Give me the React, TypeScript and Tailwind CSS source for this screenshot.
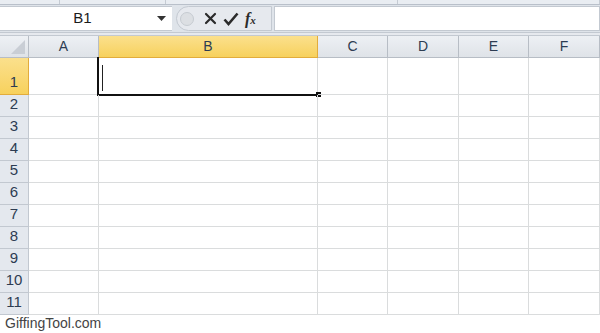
import { useState } from "react";

const cols = [
  { id: "A", w: 70 },
  { id: "B", w: 219 },
  { id: "C", w: 70 },
  { id: "D", w: 71 },
  { id: "E", w: 70 },
  { id: "F", w: 71 },
];

const rows = [1, 2, 3, 4, 5, 6, 7, 8, 9, 10, 11];

export default function App() {
  const [active] = useState({ col: "B", row: 1 });

  return (
    <div
      className="w-[600px] h-[333px] overflow-hidden bg-white flex flex-col"
      style={{ fontFamily: "'Liberation Sans', Arial, sans-serif" }}
    >
      {/* ribbon bottom edge */}
      <div className="h-[5px] bg-[#e9edf2] border-b border-[#b9c0ca] flex shrink-0">
        <div className="w-[60px] border-r border-[#c5cbd3]" />
        <div className="w-[106px] border-r border-[#c5cbd3]" />
        <div className="w-[232px] border-r border-[#c5cbd3]" />
        <div className="flex-1 border-r border-[#c5cbd3]" />
      </div>

      {/* formula bar */}
      <div className="h-[27px] bg-[#dfe4ea] pt-[1px] flex shrink-0">
        <div className="w-[172px] h-[25px] bg-white border-y border-[#c3c9d1] flex items-center">
          <span className="flex-1 text-center text-[15px] text-[#1b1b1b] pl-[8px]">{active.col}{active.row}</span>
          <svg width="9" height="5" viewBox="0 0 9 5" className="mr-[6px]">
            <path d="M0 0h9L4.5 5z" fill="#333" />
          </svg>
        </div>
        <div className="w-[96px] h-[25px] flex items-center bg-[#e6e9ee] rounded-l-full border border-[#c3c9d1] ml-[4px]">
          <div className="w-[14px] h-[14px] rounded-full bg-[#dcdfe3] border border-[#c6cbd1] ml-[3px]" />
          <svg width="13" height="13" viewBox="0 0 13 13" className="ml-[10px]">
            <path d="M2 2l9 9M11 2l-9 9" stroke="#2b2b2b" strokeWidth="2.2" strokeLinecap="round" />
          </svg>
          <svg width="16" height="14" viewBox="0 0 16 14" className="ml-[6px]">
            <path d="M1.5 7.5l4 4.5L14.5 1.5" stroke="#2b2b2b" strokeWidth="2.6" fill="none" />
          </svg>
          <span className="ml-[6px] text-[16px] italic font-bold text-[#2b2b2b] leading-none" style={{ fontFamily: "'Liberation Serif', serif" }}>
            f<span className="text-[11px]">x</span>
          </span>
        </div>
        <div className="flex-1 h-[25px] bg-white border border-[#c3c9d1] ml-[2px]" />
      </div>

      {/* separator */}
      <div className="h-[4px] bg-[#e6e9ee] border-t border-[#c3c9d1] border-b border-[#aeb5bf] shrink-0" />

      {/* column headers */}
      <div className="h-[22px] flex shrink-0">
        <div className="w-[29px] bg-gradient-to-b from-[#eef1f5] to-[#dfe3e8] border-r border-b border-[#b7bdc5] flex items-end justify-end p-[3px]">
          <svg width="14" height="14" viewBox="0 0 14 14">
            <path d="M14 0v14H0z" fill="#c9ced5" />
          </svg>
        </div>
        {cols.map((c) => (
          <div
            key={c.id}
            style={{ width: c.w }}
            className={
              c.id === active.col
                ? "bg-gradient-to-b from-[#fbe08c] to-[#f7d15c] border-r border-b border-[#e2ac3c] flex items-center justify-center text-[14px] text-[#2d3c52]"
                : "bg-gradient-to-b from-[#edf0f4] to-[#dfe3e8] border-r border-b border-[#b7bdc5] flex items-center justify-center text-[14px] text-[#2d3c52]"
            }
          >
            {c.id}
          </div>
        ))}
      </div>

      {/* rows */}
      {rows.map((r) => (
        <div key={r} className={r === 1 ? "h-[37px] flex shrink-0" : "h-[22px] flex shrink-0"}>
          <div
            className={
              r === active.row
                ? "w-[29px] bg-gradient-to-b from-[#fbe08c] to-[#f7d15c] border-r border-b border-[#e2ac3c] flex items-end justify-center pb-[1px] text-[15px] text-[#2d3c52]"
                : "w-[29px] bg-[#e4e8ee] border-r border-b border-[#c2c8d0] flex items-end justify-center pb-[1px] text-[15px] text-[#2d3c52]"
            }
          >
            {r}
          </div>
          {cols.map((c) => (
            <div
              key={c.id}
              style={{ width: c.w }}
              className="relative border-r border-b border-[#dadcdd]"
            >
              {r === active.row && c.id === active.col && (
                <div className="absolute left-[-2px] top-[-1px] right-[-1px] bottom-[-2px] border-l-2 border-b-2 border-[#111]">
                  <div className="absolute left-[3px] top-[8px] w-px h-[26px] bg-[#222]" />
                  <div className="absolute right-[-3px] bottom-[-3px] w-[5px] h-[5px] bg-[#111]" />
                </div>
              )}
            </div>
          ))}
        </div>
      ))}

      <div className="flex-1 bg-white pl-[5px] text-[14px] leading-[17px] text-[#444]">GiffingTool.com</div>
    </div>
  );
}
